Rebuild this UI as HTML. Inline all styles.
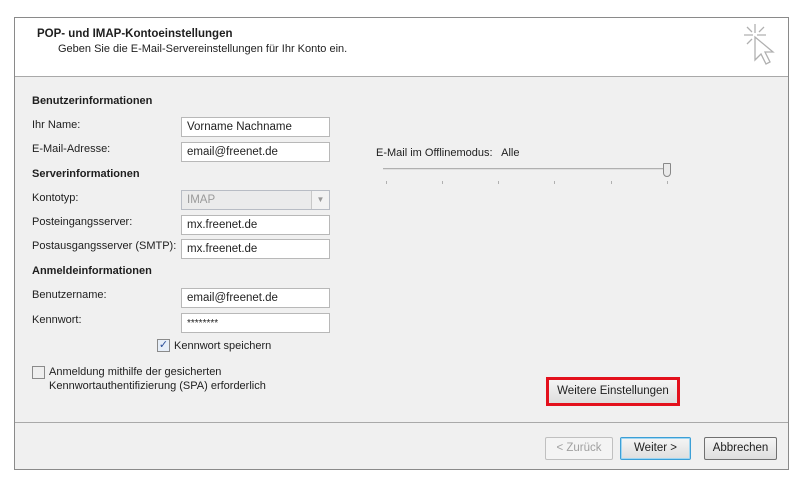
<!DOCTYPE html>
<html><head><meta charset="utf-8"><style>
*{box-sizing:border-box;margin:0;padding:0}
body{width:801px;height:479px;background:#fff;position:relative;overflow:hidden;font-family:"Liberation Sans",sans-serif;font-size:11px;color:#1e1e1e}
.a{position:absolute;white-space:nowrap}
#dlg{left:14px;top:17px;width:775px;height:453px;border:1px solid #8a8a8a;background:#f0f0f0}
#hdr{left:15px;top:18px;width:773px;height:59px;background:#fff;border-bottom:1px solid #a9a9a9}
.b{font-weight:bold}
.in{position:absolute;left:181px;width:149px;height:20px;background:#fff;border:1px solid #b8b8b8;padding:3px 0 0 5px;font-size:11.5px;color:#222}
.btn{position:absolute;height:23px;border:1px solid #707070;border-radius:2px;background:linear-gradient(#f5f5f5,#dedede);text-align:center;line-height:21px;font-size:11.5px}
.tick{position:absolute;top:181px;width:1px;height:3px;background:#b0b0b0}
</style></head><body>
<div class="a" id="dlg"></div>
<div class="a" id="hdr"></div>
<div class="a b" style="left:37px;top:28px;font-size:11.5px">POP- und IMAP-Kontoeinstellungen</div>
<div class="a" style="left:58px;top:43px">Geben Sie die E-Mail-Servereinstellungen für Ihr Konto ein.</div>
<svg class="a" style="left:740px;top:22px" width="36" height="50" viewBox="0 0 36 50" fill="none" stroke="#b0b0b0" stroke-width="1.3">
<path d="M15 2v9M4 13h9M17 13h9M7 5l5 5M24 5l-5 5M7 22l5-5"/>
<path d="M15 15v23l6-6 5 10 4-2-5-10h8z"/>
</svg>
<div class="a" style="top:422px;border-top:1px solid #a9a9a9;left:15px;width:773px"></div>

<div class="a b" style="left:32px;top:95px">Benutzerinformationen</div>
<div class="a" style="left:32px;top:119px">Ihr Name:</div>
<div class="in" style="top:117px">Vorname Nachname</div>
<div class="a" style="left:32px;top:143px">E-Mail-Adresse:</div>
<div class="in" style="top:142px">email@freenet.de</div>
<div class="a b" style="left:32px;top:168px">Serverinformationen</div>
<div class="a" style="left:32px;top:192px">Kontotyp:</div>
<div class="in" style="top:190px;background:#ebebeb;color:#9a9a9a;border-color:#b8bcc4">IMAP<div style="position:absolute;right:0;top:0;width:18px;height:18px;border-left:1px solid #c8c8c8;background:#f2f2f2;color:#999;font-size:8px;text-align:center;line-height:18px;padding:0">▼</div></div>
<div class="a" style="left:32px;top:216px">Posteingangsserver:</div>
<div class="in" style="top:215px">mx.freenet.de</div>
<div class="a" style="left:32px;top:240px">Postausgangsserver (SMTP):</div>
<div class="in" style="top:239px">mx.freenet.de</div>
<div class="a b" style="left:32px;top:265px">Anmeldeinformationen</div>
<div class="a" style="left:32px;top:289px">Benutzername:</div>
<div class="in" style="top:288px">email@freenet.de</div>
<div class="a" style="left:32px;top:314px">Kennwort:</div>
<div class="in" style="top:313px;font-size:10px;padding-top:4px">********</div>
<div class="a" style="left:157px;top:339px;width:13px;height:13px;border:1px solid #8a8a8a;background:#e6eef8;color:#2a4f9a;font-size:11px;line-height:11px;text-align:center">✓</div>
<div class="a" style="left:174px;top:340px">Kennwort speichern</div>
<div class="a" style="left:32px;top:366px;width:13px;height:13px;border:1px solid #8a8a8a;background:#eee"></div>
<div class="a" style="left:49px;top:365px;line-height:14px">Anmeldung mithilfe der gesicherten<br>Kennwortauthentifizierung (SPA) erforderlich</div>

<div class="a" style="left:376px;top:147px">E-Mail im Offlinemodus:&nbsp;&nbsp; Alle</div>
<div class="a" style="left:383px;top:168px;width:284px;height:2px;border-top:1px solid #b0b0b0;border-bottom:1px solid #e0e0e0"></div>
<div class="a" style="left:663px;top:163px;width:8px;height:14px;border:1px solid #888;border-radius:1px 1px 4px 4px;background:#eaeaea"></div>
<div class="tick" style="left:386px"></div><div class="tick" style="left:442px"></div><div class="tick" style="left:498px"></div><div class="tick" style="left:554px"></div><div class="tick" style="left:611px"></div><div class="tick" style="left:667px"></div>

<div class="a" style="left:546px;top:377px;width:134px;height:29px;border:3px solid #e3101c"></div>
<div class="btn" style="left:549px;top:380px;width:128px;border:none;line-height:23px">Weitere Einstellungen</div>

<div class="btn" style="left:545px;top:437px;width:68px;color:#a0a0a0;border-color:#c0c0c0;background:#f4f4f4">&lt; Zurück</div>
<div class="btn" style="left:620px;top:437px;width:71px;border-color:#3c9fd6;box-shadow:inset 0 0 0 1px #9fd6f2">Weiter &gt;</div>
<div class="btn" style="left:704px;top:437px;width:73px">Abbrechen</div>
</body></html>
